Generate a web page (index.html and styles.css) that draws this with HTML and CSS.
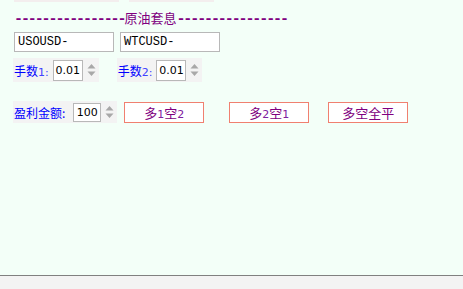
FILE: index.html
```html
<!DOCTYPE html>
<html lang="zh-CN">
<head>
  <meta charset="UTF-8">
  <title>原油套息</title>
  <link rel="stylesheet" href="styles.css">
</head>
<body>
  <div class="topbar">
    <div class="tab tab-a"></div>
    <div class="tab tab-b"></div>
  </div>

  <div class="title"><span class="dash">----------------</span>原油套息<span class="dash">----------------</span></div>

  <div class="symbols">
    <div class="sym">USOUSD-</div>
    <div class="sym">WTCUSD-</div>
  </div>

  <div class="lots">
    <div class="group">
      <span class="label">手数<span class="num">1:</span></span>
      <span class="box">0.01</span>
      <svg class="spin" width="9" height="14" viewBox="0 0 9 14"><path d="M4.5 1 L8.5 5.5 H0.5 Z M4.5 13 L8.5 8.5 H0.5 Z" fill="#a8a8a8"/></svg>
    </div>
    <div class="group">
      <span class="label">手数<span class="num">2:</span></span>
      <span class="box">0.01</span>
      <svg class="spin" width="9" height="14" viewBox="0 0 9 14"><path d="M4.5 1 L8.5 5.5 H0.5 Z M4.5 13 L8.5 8.5 H0.5 Z" fill="#a8a8a8"/></svg>
    </div>
  </div>

  <div class="profit">
    <div class="group group-profit">
      <span class="label">盈利金额:</span>
      <span class="box box-wide">100</span>
      <svg class="spin" width="9" height="14" viewBox="0 0 9 14"><path d="M4.5 1 L8.5 5.5 H0.5 Z M4.5 13 L8.5 8.5 H0.5 Z" fill="#a8a8a8"/></svg>
    </div>
    <button class="btn btn-1">多<span class="num">1</span>空<span class="num">2</span></button>
    <button class="btn btn-2">多<span class="num">2</span>空<span class="num">1</span></button>
    <button class="btn btn-3">多空全平</button>
  </div>

  <div class="statusbar"></div>
</body>
</html>
```

FILE: styles.css
```css
html, body {
  height: 100%;
}
body {
  margin: 0;
  display: flex;
  flex-direction: column;
  background: #f3fff8;
  font-family: "Noto Sans CJK SC", "DejaVu Sans", sans-serif;
  font-size: 13px;
}
.topbar {
  display: flex;
  height: 2px;
  padding-left: 14px;
  gap: 10px;
}
.tab {
  background: #f3eeee;
}
.tab-a { width: 105px; }
.tab-b { width: 85px; }

.title {
  margin-top: 8px;
  padding-left: 14px;
  height: 16px;
  line-height: 16px;
  color: #800080;
  font-size: 13px;
  white-space: nowrap;
}
.dash {
  font-family: "Liberation Mono", monospace;
  font-size: 15px;
  font-weight: bold;
  letter-spacing: -2.1px;
}

.symbols {
  display: flex;
  gap: 6px;
  margin-top: 6px;
  padding-left: 14px;
}
.sym {
  box-sizing: border-box;
  width: 100px;
  height: 20px;
  border: 1px solid #b8b8b8;
  background: #fff;
  font-family: "Liberation Mono", monospace;
  font-size: 12px;
  line-height: 18px;
  padding-left: 3px;
}

.lots {
  display: flex;
  gap: 18px;
  margin-top: 6px;
  padding-left: 13px;
}
.group {
  display: flex;
  align-items: center;
  height: 24px;
  background: #f3f3f3;
  padding-left: 1px;
  padding-right: 3px;
}
.label {
  color: #0000ff;
  font-size: 12px;
  margin-right: 4px;
}
.num {
  font-family: "DejaVu Sans", sans-serif;
  font-size: 11px;
  color: #4040ff;
}
.box {
  width: 28px;
  height: 19px;
  border: 1px solid #b8b8b8;
  background: #fff;
  font-family: "DejaVu Sans", sans-serif;
  font-size: 11px;
  line-height: 19px;
  text-align: center;
  color: #000;
}
.spin {
  margin-left: 4px;
}

.profit {
  display: flex;
  align-items: center;
  margin-top: 19px;
  padding-left: 13px;
}
.group-profit {
  height: 22px;
  padding-right: 3px;
}
.group-profit .label {
  margin-right: 8px;
}
.box-wide {
  width: 26px;
  height: 17px;
  line-height: 17px;
}
.btn {
  width: 80px;
  height: 21px;
  padding: 0;
  border: 1px solid #f08070;
  background: #fff;
  color: #800080;
  font-family: "Noto Sans CJK SC", sans-serif;
  font-size: 13px;
  line-height: 19px;
}
.btn .num {
  color: #8020a0;
  font-size: 11px;
}
.btn-1 { margin-left: 7px; }
.btn-2 { margin-left: 25px; }
.btn-3 { margin-left: 19px; }

.statusbar {
  margin-top: auto;
  height: 13px;
  border-top: 1px solid #808080;
  background: #f3f3f3;
}
```
